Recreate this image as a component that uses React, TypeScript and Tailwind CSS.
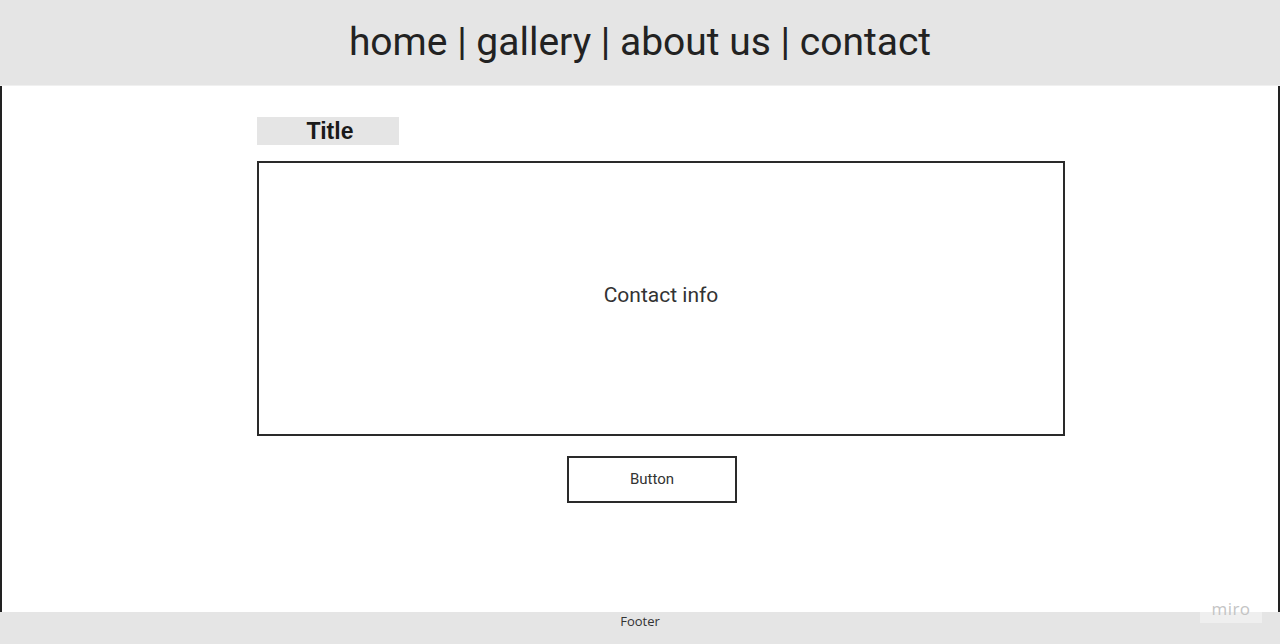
export default function App() {
  return (
    <div className="h-[644px] w-[1280px] flex flex-col bg-white overflow-hidden">
      {/* Nav bar */}
      <header className="h-[86px] bg-[#e5e5e5] flex items-center justify-center border-b border-[#f0f0f0]">
        <nav className="font-['Roboto',sans-serif] text-[39px] text-[#222] leading-none">
          home | gallery | about us | contact
        </nav>
      </header>

      {/* Page body */}
      <main className="flex-1 border-x-2 border-[#222] flex justify-start pl-[255px]">
        <div className="w-[808px] pt-[31px] flex flex-col">
          <div className="w-[142px] h-[28px] pl-[4px] bg-[#e5e5e5] flex items-center justify-center font-['Liberation_Sans',sans-serif] font-bold text-[23px] text-[#1a1a1a]">
            Title
          </div>
          <div className="mt-[16px] h-[275px] pb-[6px] border-2 border-[#2a2a2a] flex items-center justify-center font-['Roboto',sans-serif] text-[21px] text-[#333]">
            Contact info
          </div>
          <div className="flex justify-center mt-[20px] pr-[18px]">
            <button className="w-[170px] h-[47px] border-2 border-[#2a2a2a] font-['Roboto',sans-serif] text-[15px] text-[#333]">
              Button
            </button>
          </div>
        </div>
      </main>

      {/* Footer */}
      <footer className="relative h-[32px] bg-[#e5e5e5] flex justify-center font-['Open_Sans',sans-serif] text-[13px] text-[#333]">
        Footer
        <span className="absolute right-[18px] -top-[17px] w-[62px] h-[28px] bg-white/40 flex items-center justify-center font-['Open_Sans',sans-serif] text-[17px] text-[#c4c4c4] tracking-wide">
          miro
        </span>
      </footer>
    </div>
  );
}
